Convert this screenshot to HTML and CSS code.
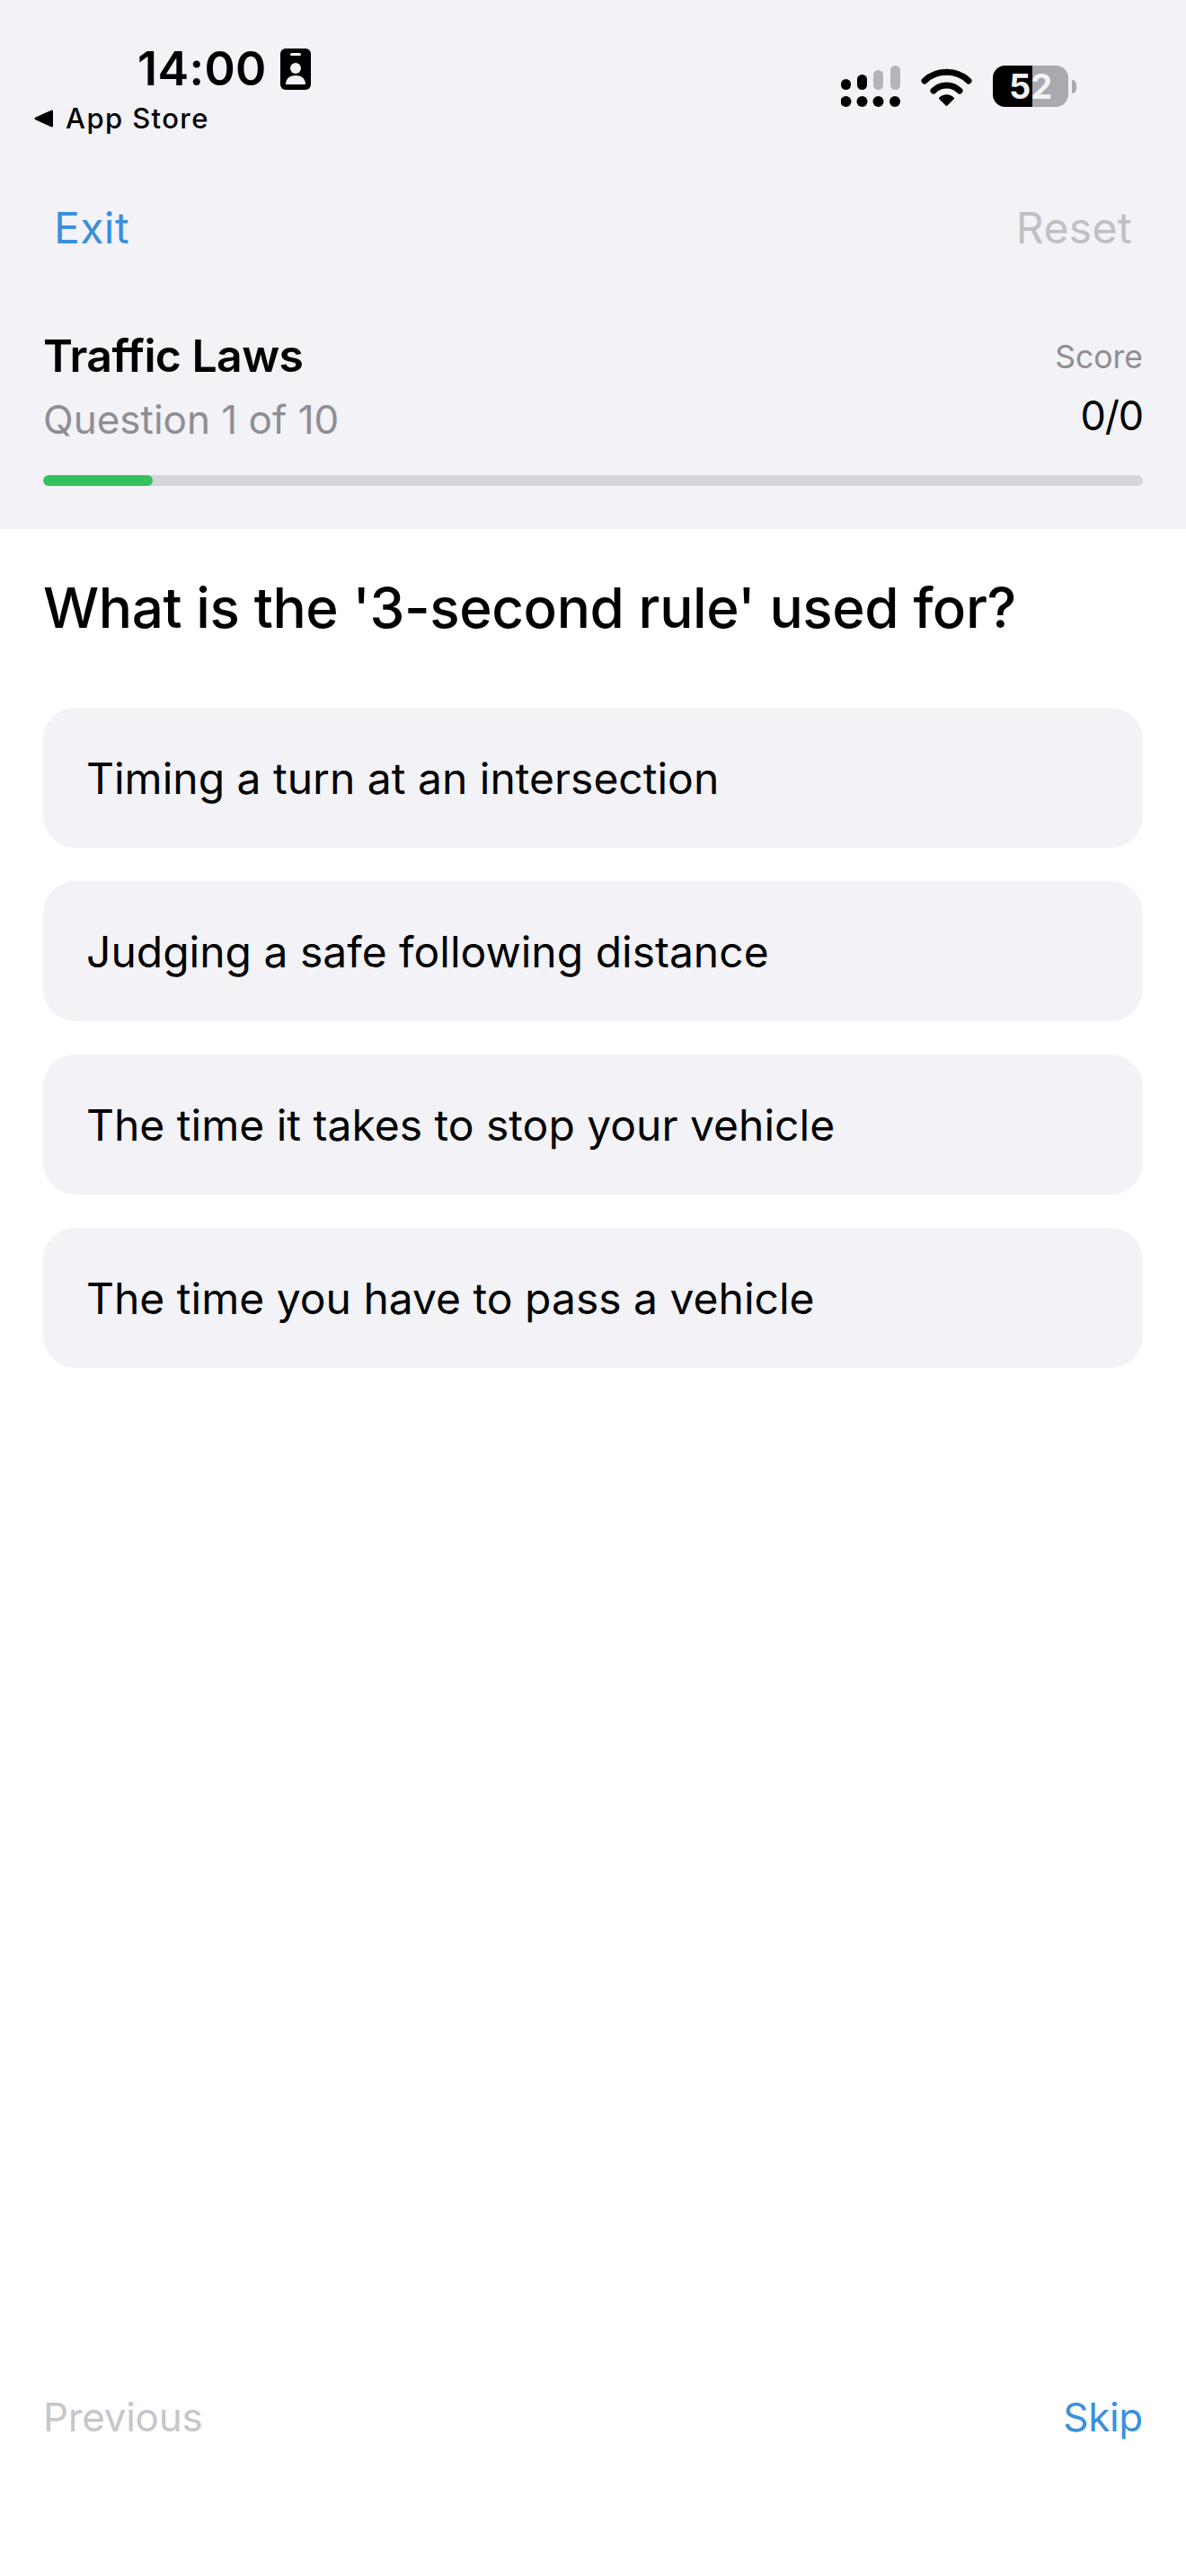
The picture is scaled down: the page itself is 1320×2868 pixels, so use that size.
FILE: index.html
```html
<!DOCTYPE html>
<html lang="en">

<head>
    <meta charset="UTF-8">
    <meta name="viewport" content="width=device-width, initial-scale=1.0">
    <title>Quiz</title>
    <link rel="stylesheet" href="styles.css">
</head>

<body>

    <header class="top">
        <div class="status">
            <div class="status-left">
                <div class="clock">
                    <span>14:00</span>
                    <svg class="badge" viewBox="0 0 34 46" width="34" height="46">
                        <rect width="34" height="46" rx="6" fill="#000" />
                        <rect x="11" y="5" width="12" height="3" rx="1.5" fill="#f2f2f7" />
                        <circle cx="17" cy="22" r="6" fill="#f2f2f7" />
                        <path d="M6 40c0-7 5-10 11-10s11 3 11 10z" fill="#f2f2f7" />
                    </svg>
                </div>
                <div class="back-app">
                    <svg viewBox="0 0 22 22" width="22" height="22">
                        <path d="M2 11 19.5 3v16z" fill="#000" stroke="#000" stroke-width="3" stroke-linejoin="round" />
                    </svg>
                    <span>App Store</span>
                </div>
            </div>
            <div class="status-right">
                <svg viewBox="0 0 66 46" width="66" height="46">
                    <rect x="0" y="15" width="11" height="12" rx="5.5" fill="#000" />
                    <rect x="18" y="10" width="11" height="17" rx="5.5" fill="#000" />
                    <rect x="36" y="5" width="11" height="22" rx="5.5" fill="#b4b4b9" />
                    <rect x="55" y="0" width="11" height="27" rx="5.5" fill="#b4b4b9" />
                    <circle cx="5.5" cy="40" r="6" fill="#000" />
                    <circle cx="23.5" cy="40" r="6" fill="#000" />
                    <circle cx="41.5" cy="40" r="6" fill="#000" />
                    <circle cx="60" cy="40" r="6" fill="#000" />
                </svg>
                <svg class="wifi" viewBox="0 0 57 42" width="57" height="42">
                    <path d="M4 14C17 1 40 1 53 14" fill="none" stroke="#000" stroke-width="7" stroke-linecap="round" />
                    <path d="M14 25C22 17 35 17 43 25" fill="none" stroke="#000" stroke-width="7" stroke-linecap="round" />
                    <path d="M28.5 41 21 33.5C25 29 32 29 36 33.5z" fill="#000" stroke="#000" stroke-width="2" stroke-linejoin="round" />
                </svg>
                <div class="battery">
                    <div class="battery-body">
                        <div class="battery-fill"></div>
                        <span>52</span>
                    </div>
                    <div class="battery-tip"></div>
                </div>
            </div>
        </div>

        <nav class="nav">
            <a class="link" href="#">Exit</a>
            <a class="link off" href="#">Reset</a>
        </nav>

        <div class="progress-head">
            <div>
                <h1>Traffic Laws</h1>
                <p class="count">Question 1 of 10</p>
            </div>
            <div class="score">
                <p class="score-label">Score</p>
                <p class="score-value">0/0</p>
            </div>
        </div>
        <div class="bar">
            <div class="bar-fill" style="width: 10%"></div>
        </div>
    </header>

    <main class="quiz">
        <h2>What is the '3-second rule' used for?</h2>
        <ul class="answers">
            <li>Timing a turn at an intersection</li>
            <li>Judging a safe following distance</li>
            <li>The time it takes to stop your vehicle</li>
            <li>The time you have to pass a vehicle</li>
        </ul>
    </main>

    <footer class="bottom">
        <a class="link off" href="#">Previous</a>
        <a class="link" href="#">Skip</a>
    </footer>

</body>
</html>
```

FILE: styles.css
```css
* {
    box-sizing: border-box;
}

body {
    font-family: Inter, "Liberation Sans", sans-serif;
    background-color: #fff;
    color: #000;
    margin: 0;
    padding: 0;
    height: 2868px;
    display: flex;
    flex-direction: column;
}

p,
h1,
h2 {
    margin: 0;
}

.top {
    background-color: #f2f2f7;
    height: 589px;
    padding: 0 48px;
}

.status {
    display: flex;
    justify-content: space-between;
    height: 150px;
}

.status-left {
    margin-left: -10px;
    padding-top: 46px;
}

.clock {
    display: flex;
    align-items: center;
    gap: 15px;
    margin-left: 115px;
    font-size: 52px;
    font-weight: 600;
    line-height: 62px;
    letter-spacing: 0.4px;
}

.back-app {
    display: flex;
    align-items: center;
    gap: 13px;
    margin-top: 3px;
    font-size: 31px;
    font-weight: 500;
    line-height: 42px;
    letter-spacing: 1.4px;
}

.status-right {
    display: flex;
    align-items: flex-start;
    gap: 23px;
    padding: 73px 74px 0 0;
    align-self: flex-start;
}

.wifi {
    margin-top: 3px;
}

.battery {
    display: flex;
    align-items: center;
    gap: 4px;
}

.battery-body {
    position: relative;
    width: 84px;
    height: 46px;
    border-radius: 14px;
    background-color: #a9a9ae;
    overflow: hidden;
    text-align: center;
    font-size: 38px;
    font-weight: 700;
    line-height: 46px;
    color: #f2f2f7;
}

.battery-fill {
    position: absolute;
    left: 0;
    top: 0;
    bottom: 0;
    width: 52%;
    background-color: #000;
}

.battery-body span {
    position: relative;
}

.battery-tip {
    width: 5px;
    height: 15px;
    border-radius: 0 5px 5px 0;
    background-color: #a9a9ae;
}

.nav {
    display: flex;
    justify-content: space-between;
    padding: 74px 12px 0;
    height: 216px;
}

.link {
    color: #3a8fde;
    text-decoration: none;
    font-size: 44px;
    line-height: 60px;
    letter-spacing: -0.3px;
}

.nav .link {
    height: 60px;
    font-size: 48px;
    letter-spacing: 0.4px;
}

.nav .off {
    color: #c0c0c4;
}

.progress-head {
    display: flex;
    justify-content: space-between;
    height: 163px;
}

h1 {
    font-size: 50px;
    font-weight: 600;
    line-height: 60px;
    letter-spacing: -0.6px;
}

.count {
    font-size: 44px;
    line-height: 54px;
    margin-top: 14px;
    color: #8e8e93;
}

.score {
    text-align: right;
}

.score-label {
    font-size: 35.5px;
    line-height: 44px;
    color: #8e8e93;
    margin-top: 10px;
}

.score-value {
    font-size: 45px;
    line-height: 54px;
    letter-spacing: -1.2px;
    margin-top: 16px;
}

.bar {
    height: 12px;
    border-radius: 6px;
    background-color: #d6d6da;
    overflow: hidden;
}

.bar-fill {
    height: 100%;
    border-radius: 6px;
    background-color: #34c25c;
}

.quiz {
    flex: 1;
    padding: 50px 48px 0;
}

h2 {
    font-size: 62px;
    font-weight: 500;
    line-height: 76px;
    letter-spacing: -0.4px;
}

.answers {
    list-style-type: none;
    margin: 0;
    padding: 0;
    margin-top: 73px;
    display: flex;
    flex-direction: column;
    gap: 37px;
}

.answers li {
    background-color: #f2f2f7;
    border-radius: 36px;
    height: 156px;
    padding: 0 48px;
    display: flex;
    align-items: center;
    font-size: 48px;
}

.bottom {
    display: flex;
    justify-content: space-between;
    padding: 0 48px;
    height: 207px;
}

.bottom .off {
    color: #c6c6cb;
}
```
